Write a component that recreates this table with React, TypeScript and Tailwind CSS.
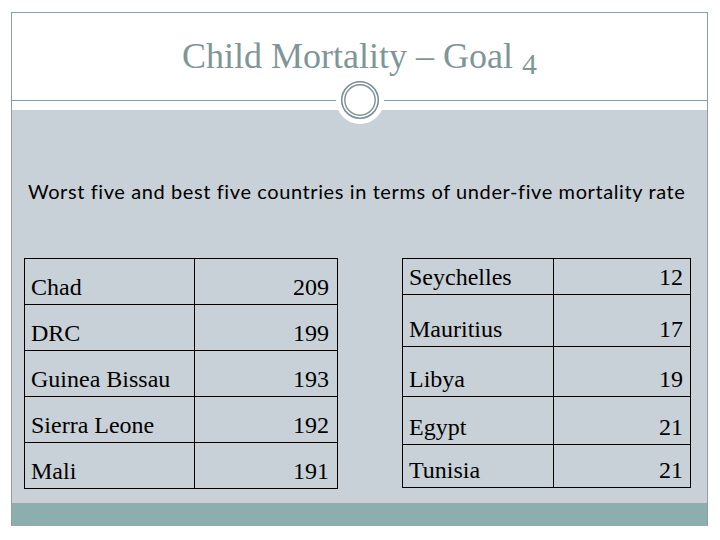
import React from "react";

type Row = { name: string; value: string; h: string };

const worst: Row[] = [
    { name: "Chad", value: "209", h: "h-[45px]" },
    { name: "DRC", value: "199", h: "h-[46px]" },
    { name: "Guinea Bissau", value: "193", h: "h-[46px]" },
    { name: "Sierra Leone", value: "192", h: "h-[46px]" },
    { name: "Mali", value: "191", h: "h-[46px]" },
];

const best: Row[] = [
    { name: "Seychelles", value: "12", h: "h-[35px]" },
    { name: "Mauritius", value: "17", h: "h-[52px]" },
    { name: "Libya", value: "19", h: "h-[50px]" },
    { name: "Egypt", value: "21", h: "h-[48px]" },
    { name: "Tunisia", value: "21", h: "h-[43px]" },
];

const Table = ({ rows, nameW, numW, numPr }: { rows: Row[]; nameW: string; numW: string; numPr: string }) => (
    <div className="flex flex-col border border-black text-black">
        {rows.map((r, i) => (
            <div key={r.name} className={`flex ${r.h} ${i > 0 ? "border-t border-black" : ""}`}>
                <div className={`${nameW} flex items-end pl-[6px] pb-[5px] border-r border-black`}>
                    <span className="font-['Liberation_Serif',serif] text-[24px] leading-[24px]">{r.name}</span>
                </div>
                <div className={`${numW} flex items-end justify-end ${numPr} pb-[5px]`}>
                    <span className="font-['Liberation_Serif',serif] text-[24px] leading-[24px]">{r.value}</span>
                </div>
            </div>
        ))}
    </div>
);

export default function App() {
    return (
        <div className="w-[720px] h-[540px] bg-white pt-[12px] pl-[11px]">
            <div className="relative flex flex-col w-[697px] h-[514px] border-x border-t border-[#8e9ea1]">
                {/* header */}
                <div className="h-[97px] flex flex-col bg-white">
                    <h1 className="mt-[25px] h-[36px] text-center font-['Liberation_Serif',serif] text-[36px] leading-[36px] text-[#7f9699]">
                        Child Mortality – Goal <span className="relative top-[6px] text-[30px]">4</span>
                    </h1>
                    <div className="mt-[26px] h-px bg-[#8a9ea1]" />
                </div>

                {/* circle ornament */}
                <div className="absolute left-1/2 top-[63px] -translate-x-1/2 w-[48px] h-[48px]">
                    <svg width="48" height="48" viewBox="0 0 48 48">
                        <circle cx="24" cy="24" r="24" fill="#ffffff" />
                        <circle cx="24" cy="24" r="18.3" fill="none" stroke="#7a9093" strokeWidth="1.6" />
                        <circle cx="24" cy="24" r="15.2" fill="none" stroke="#7a9093" strokeWidth="1.4" />
                    </svg>
                </div>

                {/* body */}
                <div className="flex-1 flex flex-col bg-[#c7d1d7]">
                    <p className="mt-[69px] pl-[16px] h-[24px] font-['Lato',sans-serif] text-[20px] leading-[24px] tracking-[0.6px] text-black">
                        Worst five and best five countries in terms of under-five mortality rate
                    </p>
                    <div className="mt-[55px] ml-[12px] flex gap-[64px] items-start">
                        <div className="w-[314px]">
                            <Table rows={worst} nameW="w-[170px]" numW="w-[142px]" numPr="pr-[8px]" />
                        </div>
                        <div className="w-[289px]">
                            <Table rows={best} nameW="w-[151px]" numW="w-[136px]" numPr="pr-[7px]" />
                        </div>
                    </div>
                </div>
                <div className="h-[23px] bg-[#8caeaf]" />
            </div>
        </div>
    );
}
